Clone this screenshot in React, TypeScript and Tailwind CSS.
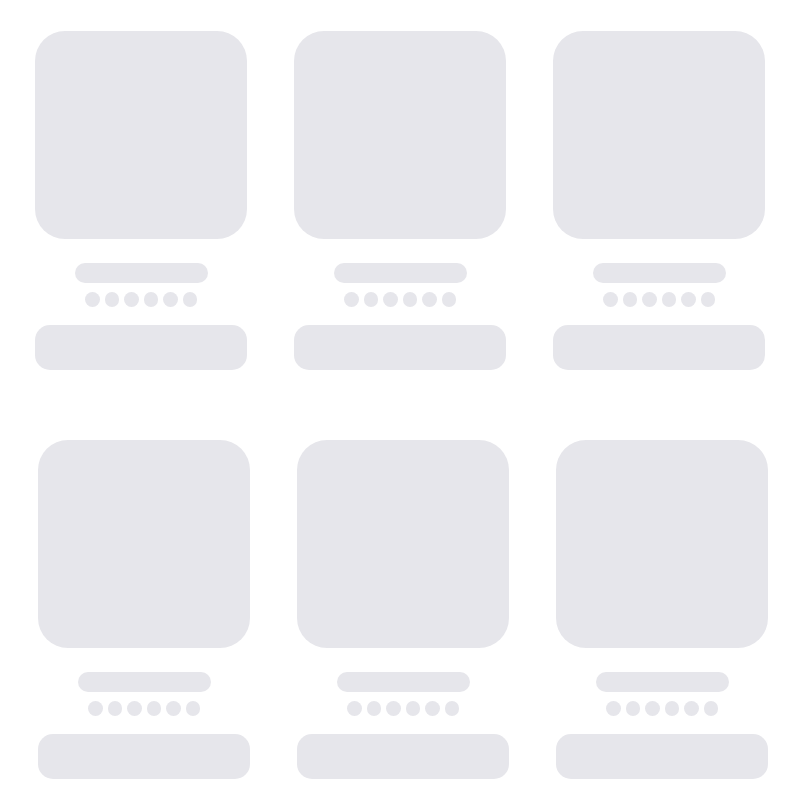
import React from "react";

function Card() {
  return (
    <div className="flex w-[212px] flex-col items-center">
      <div className="h-[208px] w-full rounded-[30px] bg-[#e6e6eb]" />
      <div className="mt-[24px] h-[20px] w-[133px] rounded-full bg-[#e6e6eb]" />
      <div className="mt-[9px] flex gap-[5px]">
        {[0, 1, 2, 3, 4, 5].map((i) => (
          <div key={i} className="h-[14.5px] w-[14.5px] rounded-full bg-[#e6e6eb]" />
        ))}
      </div>
      <div className="mt-[18.5px] h-[45px] w-full rounded-[15px] bg-[#e6e6eb]" />
    </div>
  );
}

export default function App() {
  return (
    <div className="h-[800px] w-[800px] overflow-hidden bg-white pt-[31px]">
      <div className="flex gap-[47px] pl-[35px]">
        <Card />
        <Card />
        <Card />
      </div>
      <div className="mt-[70px] flex gap-[47px] pl-[38px]">
        <Card />
        <Card />
        <Card />
      </div>
    </div>
  );
}
